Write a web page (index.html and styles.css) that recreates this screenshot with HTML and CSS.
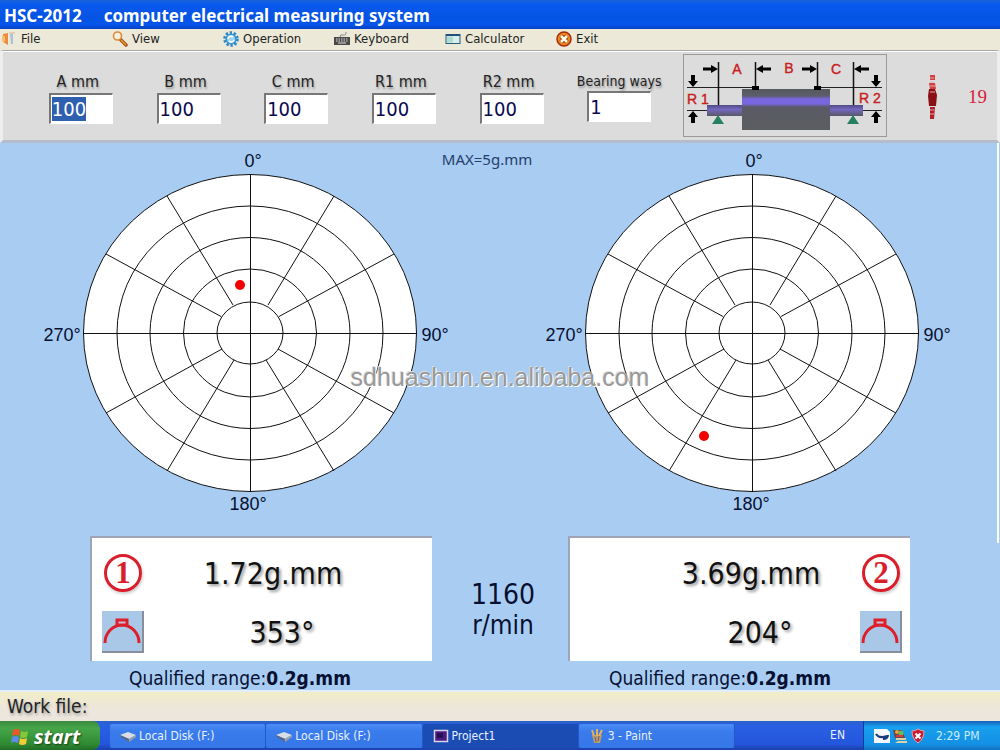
FILE: index.html
```html
<!DOCTYPE html>
<html lang="en">
<head>
<meta charset="utf-8">
<title>HSC-2012 computer electrical measuring system</title>
<link rel="stylesheet" href="styles.css">
</head>
<body>
<header class="titlebar"><h1 class="title"><span>HSC-2012</span><span>computer electrical measuring system</span></h1></header>

<nav class="menu">
  <button class="menu-item"><svg class="icon" viewBox="0 0 16 16"><path d="M1 3l5-1v12l-5-3z" fill="#ef8c3c"/><path d="M0 5l3 0v6l-3-1z" fill="#f8c06c"/><path d="M8 3h3v10H9z" fill="#a9c3dc"/><path d="M7 2h6" stroke="#d9b08e"/></svg>File</button>
  <button class="menu-item"><svg class="icon" viewBox="0 0 16 16"><path d="M8 8l6 6" stroke="#a84b12" stroke-width="3.4" stroke-linecap="round"/><path d="M9 9l5 5" stroke="#f0a030" stroke-width="1.4"/><circle cx="5.500" cy="5" r="4" fill="#f7f0dc" stroke="#dd8a3d" stroke-width="1.600"/></svg>View</button>
  <button class="menu-item"><svg class="icon" viewBox="0 0 16 16"><circle cx="8" cy="8" r="6.300" fill="none" stroke="#2f86c6" stroke-width="3" stroke-dasharray="2.300 1.650"/><circle cx="8" cy="8" r="4.800" fill="#9fd3ef" stroke="#3a93cf" stroke-width="1.600"/><path d="M5 8a3 3 0 0 1 5-2M11 9a3 3 0 0 1-5 1" stroke="#fff" fill="none" stroke-width="1.500"/></svg>Operation</button>
  <button class="menu-item"><svg class="icon" viewBox="0 0 16 16"><path d="M6 6q0-3 3-2t3-3" fill="none" stroke="#888"/><path d="M0 6h16v8H0z" fill="#494949"/><path d="M2 8h12M2 10h12" stroke="#ddd" stroke-dasharray="1.500 1"/><path d="M4 12h8" stroke="#ddd"/></svg>Keyboard</button>
  <button class="menu-item"><svg class="icon" viewBox="0 0 16 16"><rect x="1" y="3.500" width="14" height="9" fill="#d8efea" stroke="#235f78"/><path d="M1 4h14" stroke="#20507c" stroke-width="2"/><path d="M2 5.500h6v6H2z" fill="#acdcd3"/></svg>Calculator</button>
  <button class="menu-item"><svg class="icon" viewBox="0 0 16 16"><circle cx="8" cy="8" r="7" fill="#ed8b1d" stroke="#a72a0c" stroke-width="1.500"/><path d="M5 5l6 6M11 5l-6 6" stroke="#8d2a10" stroke-width="4.400"/><path d="M5 5l6 6M11 5l-6 6" stroke="#fffbe0" stroke-width="2.800"/></svg>Exit</button>
</nav>

<section class="toolbar">
  <div class="fields">
    <div class="field"><label for="fa">A mm</label><input id="fa" class="selected" value="100"></div>
    <div class="field"><label for="fb">B mm</label><input id="fb" value="100"></div>
    <div class="field"><label for="fc">C mm</label><input id="fc" value="100"></div>
    <div class="field"><label for="r1">R1 mm</label><input id="r1" value="100"></div>
    <div class="field"><label for="r2">R2 mm</label><input id="r2" value="100"></div>
    <div class="field bearing"><label for="bw">Bearing ways</label><input id="bw" value="1"></div>
  </div>
  <div class="rotor">
    <svg viewBox="684 55 202 81" role="img" aria-label="Rotor dimensions">
      <defs>
        <linearGradient id="body" x1="0" y1="0" x2="0" y2="1"><stop offset="0" stop-color="#56595c"/><stop offset=".17" stop-color="#5c5d6c"/><stop offset=".24" stop-color="#7766dd"/><stop offset=".36" stop-color="#7766dd"/><stop offset=".44" stop-color="#5a5a66"/><stop offset="1" stop-color="#5b5e60"/></linearGradient>
        <linearGradient id="shaft" x1="0" y1="0" x2="0" y2="1"><stop offset="0" stop-color="#514a82"/><stop offset=".4" stop-color="#7467c0"/><stop offset="1" stop-color="#5a5868"/></linearGradient>
        <path id="arrow" d="M0 0l-7-4v2.500h-8v3h8V4z"/>
        <path id="arrow-short" d="M0 0l-6-5v3h-6v4h6v3z"/>
      </defs>
      <path d="M687 87.500h67M820 87.500h62M687 110.500h20M863 110.500h19" stroke="#222"/>
      <rect x="707" y="105" width="156" height="11" fill="url(#shaft)"/>
      <rect x="742" y="89" width="88" height="41" fill="url(#body)"/>
      <path d="M718.500 62v43M755.500 62v25M817.500 62v25M853.500 62v43" stroke="#111" stroke-width="1.500"/>
      <path d="M752 86h7v4h-7zM814 86h7v4h-7z"/>
      <use href="#arrow" x="718" y="69"/><use href="#arrow" x="817" y="69"/>
      <use href="#arrow" transform="translate(756 69) rotate(180)"/><use href="#arrow" transform="translate(854 69) rotate(180)"/>
      <use href="#arrow-short" transform="translate(693 87) rotate(90)"/><use href="#arrow-short" transform="translate(876 87) rotate(90)"/>
      <use href="#arrow-short" transform="translate(693 111) rotate(-90)"/><use href="#arrow-short" transform="translate(876 111) rotate(-90)"/>
      <path d="M718 115l6 9h-12zM853 115l6 9h-12z" fill="#258062"/>
      <g class="rotor-text"><text x="737" y="74">A</text><text x="789" y="73">B</text><text x="836" y="74">C</text><text x="698" y="104">R 1</text><text x="870" y="103">R 2</text></g>
    </svg>
  </div>
  <div class="counter">
    <svg class="figure" viewBox="0 0 12 46"><path d="M4 1h5v5H4zM3 9h6l1 6H4z" fill="#d04040"/><path d="M3 15h6l2 6-1 11H3L2 22z" fill="#8a1016"/><path d="M4 33h5l-1 12H4z" fill="#b0202a"/><path d="M4 4h4M4 8h4M4 12h6M4 18h5M4 36h4M4 40h4" stroke="#e8a8a8"/></svg>
    <output>19</output>
  </div>
</section>

<main class="canvas">
  <div class="plots">
    <svg class="plot" viewBox="39 145 420 380" role="img" aria-label="Plane 1 polar plot">
      <defs>
        <g id="polar">
          <ellipse cx="250" cy="333" rx="166.500" ry="158.500" fill="#fff"/>
          <ellipse cx="250" cy="333" rx="133" ry="127"/><ellipse cx="250" cy="333" rx="100" ry="95.500"/><ellipse cx="250" cy="333" rx="66.500" ry="64"/><ellipse cx="250" cy="333" rx="33" ry="31"/>
          <path d="M250.500 174.500v317M83.500 333.500h333M334 196L268 305M394 254L279 316.500M106 254L221 316.500M167 196L233 305M394 413L278 349M334 471L266 360M167 471L234 360M106 413L222 349"/>
        </g>
      </defs>
      <use href="#polar" class="grid-lines"/>
      <circle cx="240" cy="285" r="5" fill="#f00000"/>
      <g class="plot-text"><text x="253" y="167">0°</text><text x="435" y="341">90°</text><text x="62" y="341">270°</text><text x="248" y="510">180°</text></g>
    </svg>
    <svg class="plot right" viewBox="39 145 420 380" role="img" aria-label="Plane 2 polar plot">
      <use href="#polar" class="grid-lines"/>
      <circle cx="202" cy="436" r="5" fill="#f00000"/>
      <g class="plot-text"><text x="252" y="167">0°</text><text x="435" y="341">90°</text><text x="62" y="341">270°</text><text x="249" y="510">180°</text></g>
    </svg>
    <p class="max">MAX=5g.mm</p>
  </div>
  <p class="watermark">sdhuashun.en.alibaba.com</p>

  <div class="results">
    <div class="card">
      <div class="badges"><span class="num">1</span><button class="probe" aria-label="Plane 1 probe"><svg viewBox="0 0 40 40"><path d="M3 32A17 18 0 0 1 37 32" fill="none" stroke="#dc1f2b" stroke-width="3"/><path d="M15 9h10v5H15z" fill="#c9bfd6" stroke="#dc1f2b" stroke-width="3"/></svg></button></div>
      <div class="values"><output>1.72g.mm</output><output class="angle">353°</output></div>
    </div>
    <p class="speed"><span class="rpm">1160</span><span>r/min</span></p>
    <div class="card mirrored">
      <div class="badges"><span class="num">2</span><button class="probe" aria-label="Plane 2 probe"><svg viewBox="0 0 40 40"><path d="M3 32A17 18 0 0 1 37 32" fill="none" stroke="#dc1f2b" stroke-width="3"/><path d="M15 9h10v5H15z" fill="#c9bfd6" stroke="#dc1f2b" stroke-width="3"/></svg></button></div>
      <div class="values"><output>3.69g.mm</output><output class="angle">204°</output></div>
    </div>
    <p class="range">Qualified range:<b>0.2g.mm</b></p>
    <p class="range second">Qualified range:<b>0.2g.mm</b></p>
  </div>
</main>

<section class="workfile">Work file:</section>

<footer class="taskbar">
  <button class="start"><svg class="flag" viewBox="0 0 20 18"><path d="M3 2q4-2 7 0L9 8q-3-2-7 0z" fill="#e8582a"/><path d="M11 3q4 2 7 0l-1 6q-4 2-7 0z" fill="#84c838"/><path d="M2 9q3-2 7 0l-1 6q-4-2-7 0z" fill="#5d8bea"/><path d="M10 10q3 2 7 0l-1 6q-4 2-7 0z" fill="#f6cb35"/></svg>start</button>
  <div class="tasks">
    <button class="task"><svg class="icon" viewBox="0 0 16 16"><path d="M0 7l8-3 8 3-7 4z" fill="#d9dde4"/><path d="M0 7l9 4v3L1 9z" fill="#5b6680"/><path d="M9 11l7-4v2l-7 5z" fill="#98a0b0"/></svg>Local Disk (F:)</button>
    <button class="task"><svg class="icon" viewBox="0 0 16 16"><path d="M0 7l8-3 8 3-7 4z" fill="#d9dde4"/><path d="M0 7l9 4v3L1 9z" fill="#5b6680"/><path d="M9 11l7-4v2l-7 5z" fill="#98a0b0"/></svg>Local Disk (F:)</button>
    <button class="task active"><svg class="icon" viewBox="0 0 16 16"><rect x="1.500" y="2.500" width="13" height="11" fill="#4a1a86" stroke="#d9d4e6" stroke-width="1.500"/><path d="M4 5h6v5H4z" fill="#28104e"/></svg>Project1</button>
    <button class="task"><svg class="icon" viewBox="0 0 16 16"><path d="M3 7h10l-2 8H5z" fill="#b79c6b"/><path d="M5 8L3 2M8 8V1M10 8l3-6" stroke="#e5b257" stroke-width="2"/><path d="M6 9l1 5M10 8l-1 5" stroke="#6d5a80"/></svg>3 - Paint</button>
  </div>
  <span class="lang">EN</span>
  <div class="tray">
    <svg class="icon" viewBox="0 0 16 16"><path d="M0 1h13l3 3v11H0z" fill="#f4f8fc"/><path d="M2 6q3 5 11 2M9 11q5 0 5-4" fill="none" stroke="#183c7c" stroke-width="2"/></svg>
    <svg class="icon" viewBox="0 0 16 16"><path d="M1 2h9l3 8H3z" fill="#6a4450"/><circle cx="5" cy="4" r="2" fill="#e8a33a"/><circle cx="9" cy="5" r="2.500" fill="#68bb55"/><path d="M4 10h10v2H4zM6 13h9v2H3z" fill="#d9d3a6"/><path d="M4 8h7" stroke="#d83a3a" stroke-width="2"/></svg>
    <svg class="icon" viewBox="0 0 16 16"><path d="M8 1q3 2 6 2 0 8-6 12Q2 11 2 3q3 0 6-2z" fill="#c81d31" stroke="#e7a0aa"/><path d="M5.500 5.500l5 5M10.500 5.500l-5 5" stroke="#fff" stroke-width="2"/></svg>
    <time>2:29 PM</time>
  </div>
</footer>
</body>
</html>
```
FILE: styles.css
```css
* { box-sizing: border-box; }
body { margin: 0; min-height: 100vh; display: flex; flex-direction: column; font-family: "DejaVu Sans Condensed", "Noto Sans", sans-serif; color: #061030; background: #a9ccf3; }
p, h1 { margin: 0; }
button { font: inherit; color: inherit; border: 0; padding: 0; background: none; display: flex; align-items: center; }
.icon { width: 16px; height: 16px; flex: none; }

.titlebar { height: 29px; flex: none; display: flex; align-items: center; padding: 2px 4px 0; background: linear-gradient(#1a63d8 0, #0a5af0 15%, #0453e2 60%, #0555ec 85%, #0740c0 100%); }
.title { display: flex; gap: 22px; font: bold 17px/24px "Noto Sans", sans-serif; color: #fff; }

.menu { height: 21px; flex: none; display: flex; background: #ece9d8; color: #222; font-size: 13px; padding: 0 0 2px 2px; }
.menu-item { width: 111px; gap: 4px; }
.menu-item:first-child { width: 110px; gap: 3px; }

.toolbar { height: 93px; flex: none; display: flex; align-items: stretch; background: #dcdcdc; border-top: 1px solid #aaa; border-bottom: 3px solid #b6bccb; border-left: 3px solid #eee; border-right: 3px solid #eee; box-shadow: inset 0 1px #fff; }
.fields { display: flex; flex: 0 1 680px; padding: 20px 6px 0 24px; }
.field { flex: 1; display: flex; flex-direction: column; align-items: center; font-size: 16px; line-height: 22px; color: #222; }
.field label { white-space: nowrap; padding-right: 6px; text-shadow: 1px 2px 2px #999; }
.field input { width: 64px; height: 31px; border: 1px solid #fff; border-top: 2px solid #777; border-left: 2px solid #777; background: #fff; padding: 0 1px; font: 20px "DejaVu Sans Condensed", "Noto Sans", sans-serif; color: #0a0a50; outline: 0; }
.field .selected { background: linear-gradient(#2f5faf, #2f5faf) 1px 2px / 34px 24px no-repeat #fff; color: #fff; }
.field.bearing { font-size: 14px; line-height: 20px; padding-right: 4px; }
.bearing label { padding: 0; }
.rotor { width: 204px; flex: none; margin: 3px 0; display: flex; border: 1px solid #999; }
.rotor svg { width: 100%; height: 100%; }
.rotor-text { font: 14px "Liberation Sans", sans-serif; fill: #c8201c; stroke: #c8201c; stroke-width: .4; text-anchor: middle; }
.counter { flex: 1; display: flex; align-items: center; justify-content: flex-end; gap: 30px; padding: 3px 10px 0 0; font: 19px "Liberation Serif", serif; color: #d8203c; }
.figure { width: 12px; height: 46px; }

.canvas { flex: 1; position: relative; display: flex; flex-direction: column; background: linear-gradient(#fff, #fff) right 1px top 0 / 2px 400px no-repeat #a9ccf3; }
.plots { display: grid; grid-template-columns: 420px 420px; column-gap: 82px; justify-content: center; padding-top: 2px; }
.plot { width: 100%; grid-row: 1; grid-column: 1; }
.plot.right { grid-column: 2; }
.grid-lines { fill: none; stroke: #111; stroke-width: 1; }
.plot-text { font: 18px "Liberation Sans", sans-serif; fill: #061030; text-anchor: middle; }
.max { grid-row: 1; grid-column: 1 / 3; justify-self: center; padding: 4px 26px 0 0; font: 15px/20px "Noto Sans", sans-serif; color: #24406c; }
.watermark { position: absolute; top: 220px; left: 0; right: 0; text-align: center; font: 25px/28px "Liberation Sans", sans-serif; color: #999; text-shadow: 1px 1px #fff, -1px -1px #ddd; }

.results { display: grid; grid-template-columns: 342px 136px 342px; justify-content: center; padding-top: 11px; }
.card { height: 125px; display: flex; background: #fff; border-top: 2px solid #a0a4b8; border-left: 2px solid #a0a4b8; padding: 14px 10px 8px; }
.mirrored { flex-direction: row-reverse; padding: 14px 8px 8px; }
.badges { display: flex; flex-direction: column; justify-content: space-between; align-items: center; width: 42px; }
.num { width: 38px; height: 38px; margin-top: 2px; border: 3px solid #d81f2b; border-radius: 50%; text-align: center; font: bold 31px/32px "Liberation Serif", serif; color: #d81f2b; box-shadow: 1px 2px 3px #ccc; }
.probe { width: 42px; height: 42px; background: #a9c8e8; border-right: 2px solid #888e9c; border-bottom: 2px solid #888e9c; }
.probe svg { width: 100%; height: 100%; }
.values { flex: 1; display: flex; flex-direction: column; align-items: center; justify-content: space-between; font-size: 30px; line-height: 40px; color: #111; text-shadow: 2px 2px 3px #999; padding: 2px 20px 0 0; }
.mirrored .values { padding: 2px 0 0 64px; }
.angle { padding-left: 18px; }
.speed { display: flex; flex-direction: column; align-items: center; padding: 44px 0 0 6px; line-height: 30px; }
.speed span { font-size: 26px; }
.speed .rpm { font-size: 28px; }
.range { padding: 6px 42px 0 0; font-size: 19px; line-height: 23px; text-align: center; white-space: nowrap; }
.second { grid-column: 3; padding-right: 38px; }

.workfile { height: 31px; flex: none; background: linear-gradient(#f2edc8, #ece6dc 60%, #ece6dc); border-top: 2px solid #e4eef6; padding-left: 7px; font-size: 19px; line-height: 29px; color: #222; text-shadow: 1px 2px 3px #999; }

.taskbar { height: 29px; flex: none; display: flex; align-items: stretch; background: linear-gradient(#2a62c4 0, #2a5fe4 15%, #2456dc 80%, #1a3fa8); color: #e8f2ff; font-size: 12px; }
.start { width: 100px; flex: none; gap: 4px; padding: 2px 0 0 10px; border-radius: 0 8px 8px 0; background: linear-gradient(#3b8a3f, #45a548 25%, #2f8a32 80%, #226b26); color: #fff; font: italic bold 20px "Noto Sans", sans-serif; text-shadow: 1px 1px 2px #143c14; }
.flag { width: 20px; height: 18px; }
.tasks { flex: 0 1 625px; display: flex; margin-left: 10px; padding: 3px 0 2px; }
.task { flex: 1; gap: 3px; padding-left: 10px; background: linear-gradient(#4c8cf4, #3a7cec 30%, #3576e8); border-right: 1px solid #2458c8; border-radius: 2px; }
.active { background: #1a4cb4; }
.lang { margin-left: auto; padding-right: 18px; line-height: 29px; }
.tray { flex: 0 0 137px; display: flex; align-items: center; gap: 2px; padding-left: 10px; border-left: 1px solid #123f98; background: linear-gradient(#1660b8, #18a0ee 20%, #1490e4 80%, #1070c0); }
.tray time { margin-left: 8px; color: #c8ecff; white-space: nowrap; }
```
